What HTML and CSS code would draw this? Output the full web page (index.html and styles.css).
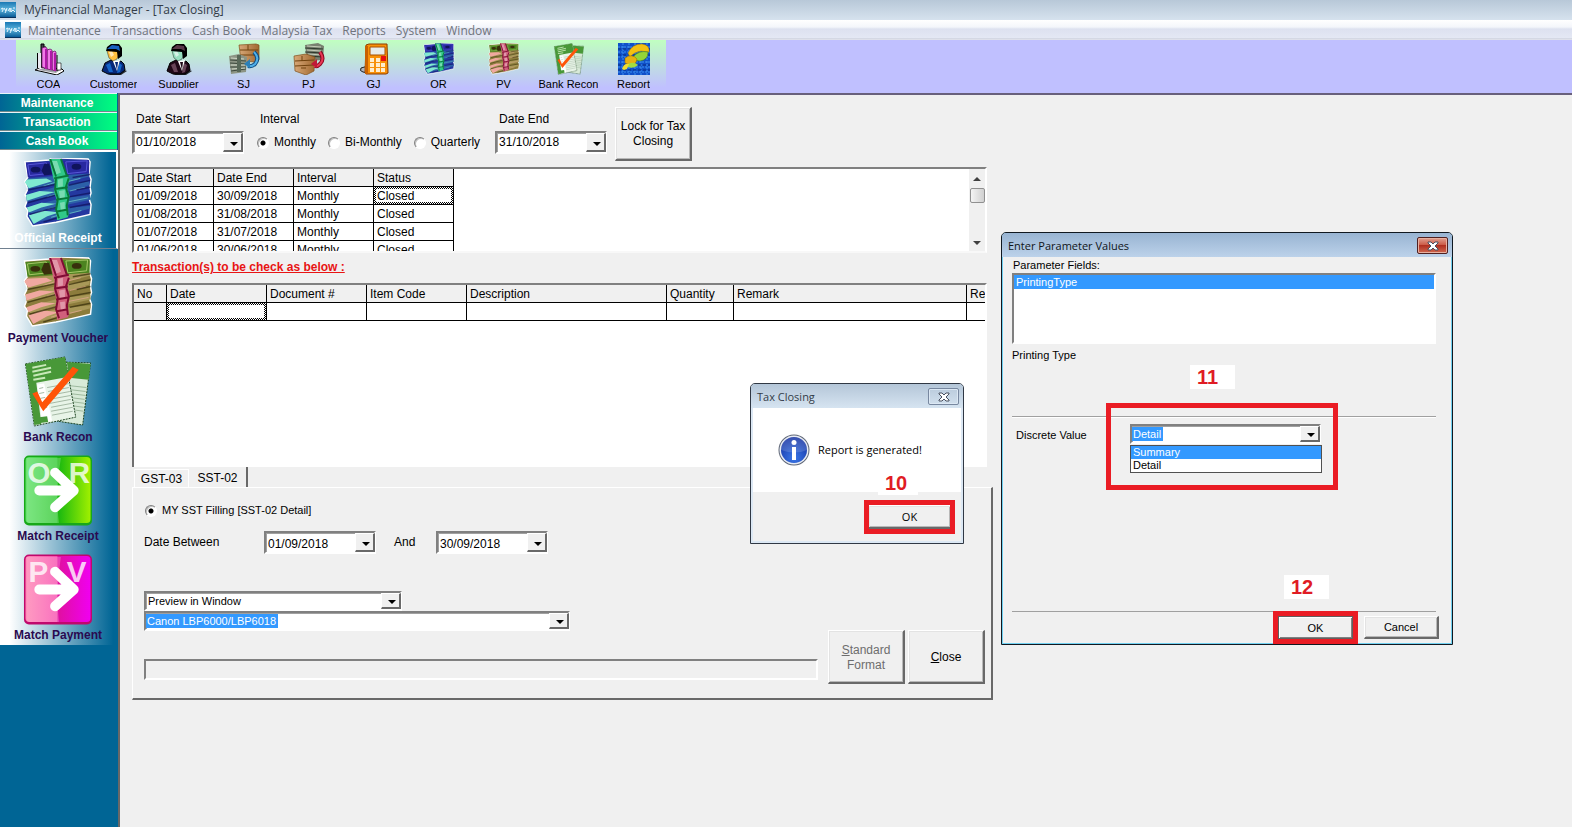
FILE: index.html
```html
<!DOCTYPE html>
<html lang="en">
<head>
<meta charset="utf-8">
<title>MyFinancial Manager - [Tax Closing]</title>
<link rel="stylesheet" href="styles.css">
</head>
<body>
<svg class="defs" aria-hidden="true">
  <defs>
    <linearGradient id="appg" x1="0" y1="0" x2="0" y2="1"><stop offset="0" stop-color="#1a78b4"/><stop offset=".5" stop-color="#5cb4dc"/><stop offset="1" stop-color="#0a5c98"/></linearGradient>
    <linearGradient id="grn"><stop offset="0" stop-color="#58e060"/><stop offset=".48" stop-color="#30c830"/><stop offset=".5" stop-color="#18b810"/><stop offset="1" stop-color="#a0f000"/></linearGradient>
    <linearGradient id="pnk"><stop offset="0" stop-color="#ff80b0"/><stop offset=".48" stop-color="#f84cae"/><stop offset=".5" stop-color="#e010a0"/><stop offset="1" stop-color="#f000f0"/></linearGradient>
    <radialGradient id="inf" cx=".5" cy=".8" r=".8"><stop offset="0" stop-color="#3a78e8"/><stop offset="1" stop-color="#1430a0"/></radialGradient>
    <linearGradient id="wood"><stop offset="0" stop-color="#d8a878"/><stop offset="1" stop-color="#a06830"/></linearGradient>
    <symbol id="app" viewBox="0 0 16 16"><path fill="url(#appg)" d="M0 0h16v15H0z"/><path fill="none" stroke="#e8f6ff" d="M1 7l2-1v2l-1 2M4 6l2 3 1-3M6 9l-1 2M8 9l2-3v4M11 6v4l2-2 2 2M13 6h2"/><path stroke="#08305c" d="M0 15.500h16"/></symbol>
    <symbol id="cash" viewBox="0 0 70 72">
      <path fill="var(--base)" stroke="#fff" stroke-width="1.500" d="M1 4L26 2 28 0 38 0 66 1 68 4 67 16 69 22 68 30 69 36 67 42 69 48 68 58 42 64 33 66 9 70 3 60 4 54 1 50 4 42 1 38 4 32 1 24 4 20z"/>
      <path fill="var(--mid)" d="M4 21l63-6v4L36 27 4 32zM2 38l33-9 32-5v4L40 36 3 45zM3 51l33-9 32-4v5l-32 7-29 7zM5 60l32-8 31-3v3L38 60 9 67z"/>
      <path fill="var(--light)" d="M3 22l20-1 6 3-24 7-4-6zM2 38l14-4 16 1-14 4-15 5zM3 51l15-5 15 1-15 4-13 5zM5 59l14-5 17 2-12 4-14 8z"/>
      <path fill="none" stroke="var(--light)" stroke-opacity=".6" d="M20 29l12-4M24 40l10-3M24 53l10-3M28 61l10-3M46 24l12-3M47 34l16-4M46 45l20-4M47 57l12-3"/>
      <path fill="none" stroke="var(--dark)" stroke-opacity=".75" stroke-width="1.500" d="M4 33l29-6M46 28l22-5M4 46l29-8M46 40l22-4M6 58l29-8M47 51l21-4M20 66l16-5M54 33l14-3M50 20l18-3"/>
      <path fill="var(--top)" d="M2 5l65-3v14L4 20z"/><path fill="none" stroke="var(--line)" d="M4 7l19-2 2 11-19 2zM43 4l22-1-1 11-19 2z"/>
      <ellipse cx="12" cy="12" rx="5" ry="3" fill="var(--dark)"/><ellipse cx="54" cy="9" rx="5" ry="3" fill="var(--dark)"/><path fill="var(--dark)" d="M21 6h5l3 11-8 1-3-5z"/>
      <path fill="var(--strap)" d="M26 1l12 0 5 16 4 5-3 8 3 9-3 8 2 11-1 3-11 3-1-12 1-8-3-9 2-7-3-8z"/>
      <path fill="#fff" fill-opacity=".35" d="M29 3l5 0 4 12-5 2zM35 22l5-1v8l-5 1zM36 34l6-1v8l-5 1zM37 46l5-1v9l-4 1z"/>
      <path fill="none" stroke="var(--edge)" stroke-width="2" d="M27 1l6 18M38 1l6 17M31 21l15-3M32 32l13-2M33 43l12-2M34 55l11-2M33 21l-1 11 3 10-2 11 3 9M46 21l-3 9 3 10-2 9 1 10"/>
    </symbol>
    <symbol id="recon" viewBox="0 0 70 72">
      <path fill="#d8ead8" stroke="#18401c" stroke-dasharray="2 1" d="M34 6l34 1-8 63-26-4z"/><path fill="#489838" d="M44 6l24 2-2 16-20-2z"/>
      <path stroke="#9cb89c" d="M46 30l18 2M46 34l17 2M46 38l17 2M46 42l16 2M46 46l16 2M46 50l15 2M46 54l15 2"/>
      <path fill="#e8f4e8" stroke="#18401c" stroke-dasharray="2 1" d="M2 8L42 1l11 61-42 9z"/>
      <path fill="#489838" d="M2 8L42 1l4 20-33 6 5 42-7 1z"/>
      <path stroke="#c8e8b8" stroke-width="2" d="M9 12l14-3M9 16l19-4M10 20l18-4M10 24l12-2"/>
      <path fill="#fff" d="M14 29l7-1 8 38-10 2z"/><path fill="#489838" d="M16 62l8-1 1 6-8 1z"/>
      <path stroke="#a4b8a4" d="M24 32l22-4M25 36l21-4M26 40l21-4M26 44l22-4M27 48l21-4M28 52l21-4M28 56l22-4M29 60l21-4M16 33l4-1M16 38l5-1M17 43l5-1M18 48l5-1M19 53l5-1"/>
      <path fill="#ff5408" d="M9 38l5-2 5 11L50 11l6 3-36 42z"/>
    </symbol>
    <symbol id="person" viewBox="0 0 32 32">
      <path fill="#000" fill-opacity=".8" d="M24 26l5 2-6 4H10z"/>
      <path fill="var(--suit)" stroke="#000" d="M4 28l3-8 6-3 5 3 5-2 3 3 1 6-5 4-12 0z"/>
      <path fill="var(--suit-hi)" d="M8 22l4-2 3 9-4 0zM21 20l3 2-2 7-3 1z"/>
      <path fill="#fff" d="M14 16l4 2 4-1-3 11z"/><path fill="var(--suit)" d="M17 19h3l-1 8z"/>
      <path fill="var(--skin)" stroke="#000" stroke-width=".4" d="M9 8l4-3 7 1 1 5-2 5-4 2-4-3z"/><path fill="#fff" fill-opacity=".6" d="M11 9l3-1 2 4-3 2z"/>
      <path fill="#000" d="M8 8l1-4 4-3 8 0 3 4 0 8-4 3-1-7z"/><path fill="var(--hair)" d="M9 6l5-4 7 1 1 5-4-2z"/>
    </symbol>
  </defs>
</svg>

<header class="titlebar"><svg class="app-icon"><use href="#app"/></svg><h1 class="title-text">MyFinancial Manager - [Tax Closing]</h1></header>
<nav class="menubar" aria-label="Main menu">
  <svg class="app-icon"><use href="#app"/></svg>
  <button>Maintenance</button><button>Transactions</button><button>Cash Book</button><button>Malaysia Tax</button><button>Reports</button><button>System</button><button>Window</button>
</nav>
<div class="toolbar">
  <div class="tools">
    <button class="tool"><svg viewBox="0 0 32 32"><path fill="#fff" stroke="#000" d="M2 27l6-3 21 2 2 2-7 4z"/><path fill="#a0a0a8" d="M5 27l5-2 17 2-4 3z"/><path fill="#404048" stroke="#000" d="M8 1h3v23H8z"/><path fill="#e8e8f0" d="M5 10h3v15H5z"/><path stroke="#000" d="M4.500 10v15M12 3v23M16 6v20M20 9v18M24 12v16"/><path fill="#f078e8" stroke="#60105c" stroke-width=".7" d="M9 5l3-1 2 1v21l-5-2zM14 7l3-1 2 1v20l-5-1zM19 9l3-1 1 1v19l-4-1z"/><path fill="#b018a8" d="M12 6h2v20h-2zM17 8h2v19h-2zM21 10h2v18h-2z"/><path fill="#fff" stroke="#000" stroke-width=".6" d="M24 20h4v7h-4z"/></svg><span>COA</span></button>
    <button class="tool customer"><svg><use href="#person"/></svg><span>Customer</span></button>
    <button class="tool supplier"><svg><use href="#person"/></svg><span>Supplier</span></button>
    <button class="tool"><svg viewBox="0 0 32 32"><path fill="url(#wood)" stroke="#80501c" stroke-width=".7" d="M11 2l17-1 3 1v15l-3 2-15-1z"/><path stroke="#70420e" fill="none" d="M12 7h18M12 12h18M20 2v5"/><path fill="#8c9484" d="M1 13l10-2 8 3-1 15-15 2z"/><path fill="none" stroke="#3c483c" d="M2 17l16 1M2 20l16 1M2 24l16 0M3 28l15-2"/><path stroke="#d0d8c8" d="M3 15l13 1M3 22l14 0M4 26l13-1"/><path fill="#586858" d="M9 12h4v17H9z"/><path fill="none" stroke="#104c80" stroke-width="4" d="M26 9q6 6 1 12-3 3-7 2"/><path fill="none" stroke="#50b0e8" stroke-width="2" d="M26 9q6 6 1 12-3 3-8 2"/><path fill="#2c80b8" d="M16 21l6-5v9z"/></svg><span>SJ</span></button>
    <button class="tool"><svg viewBox="0 0 32 32"><path fill="#788070" d="M12 2l13-2 6 3-1 14-16 1z"/><path stroke="#2c382c" d="M12 5l18 1M12 9l18 1M13 13l17 1"/><path stroke="#c4ccb8" d="M14 3l14 1M14 7l14 1M15 11l14 1"/><path fill="url(#wood)" stroke="#80501c" stroke-width=".7" d="M1 13l12-2 9 3-1 14-8 4-11-4z"/><path stroke="#70420e" fill="none" d="M2 18l19-1M2 23l19-1M9 13v5M8 25h5"/><path fill="none" stroke="#8c0820" stroke-width="4" d="M27 9q5 7 0 12-3 3-5 2"/><path fill="none" stroke="#e83854" stroke-width="2" d="M27 9q5 7 0 12-3 3-6 2"/><path fill="#c01838" d="M18 21l6-5v9z"/></svg><span>PJ</span></button>
    <button class="tool"><svg viewBox="0 0 32 32"><path fill="#b0b4bc" stroke="#202020" d="M3 25q-2 3 2 4l5 1V23z"/><path fill="#f89008" stroke="#8c3c00" d="M8 2l3-1h18l1 29-2 1H8L7 29z"/><path fill="#c86000" d="M7 3h3v28H7z"/><path fill="#e8ecec" stroke="#a85000" d="M12 4h15v8H12z"/><path fill="#ffeccc" d="M12 15h4v4h-4zM18 15h4v4h-4zM12 20h4v4h-4zM18 20h4v4h-4zM23 20h4v4h-4zM12 25h4v4h-4zM18 25h4v4h-4zM23 25h4v4h-4z"/><path fill="#e81010" d="M23 13h5v5h-5z"/></svg><span>GJ</span></button>
    <button class="tool cash-or"><svg><use href="#cash"/></svg><span>OR</span></button>
    <button class="tool cash-pv"><svg><use href="#cash"/></svg><span>PV</span></button>
    <button class="tool"><svg><use href="#recon"/></svg><span>Bank Recon</span></button>
    <button class="tool"><svg viewBox="0 0 32 32"><path fill="#1050c8" d="M0 0h32v32H0z"/><path stroke="#3c90f0" stroke-dasharray="2 1" d="M0 4h32M0 9h32M0 14h32M0 19h32M0 24h32M0 29h32M5 0v32M11 0v32M17 0v32M23 0v32M29 0v32"/><path stroke="#082c80" stroke-dasharray="3 2" d="M0 6h32M0 12h32M0 22h32M0 27h32"/><path fill="#f4c010" stroke="#a87800" stroke-width=".5" d="M10 10Q14 1 24 1q8 1 7 8l-8-1q-7 1-11 6z"/><path fill="#94d438" stroke="#3c7c10" stroke-width=".5" d="M15 14q6-7 15-5 0 8-8 9l-6-1z"/><path fill="#e8b010" stroke="#906000" stroke-width=".5" d="M7 15q7-5 12 1-1 6-7 6l-5-2z"/><path fill="#a4dc40" d="M10 21q6-3 10 1-4 4-10 2z"/><path fill="#f0dc30" d="M4 26q2-6 7-5l-2 5-3 1z"/></svg><span>Report</span></button>
  </div>
</div>

<div class="shell">
  <aside class="sidebar">
    <button class="group">Maintenance</button>
    <button class="group">Transaction</button>
    <button class="group">Cash Book</button>
    <button class="side-item active cash-or"><svg><use href="#cash"/></svg><span>Official Receipt</span></button>
    <button class="side-item cash-pv"><svg><use href="#cash"/></svg><span>Payment Voucher</span></button>
    <button class="side-item"><svg><use href="#recon"/></svg><span>Bank Recon</span></button>
    <button class="side-item"><svg viewBox="0 0 70 72"><rect x=".5" y=".5" width="69" height="71" rx="5" fill="#18a818"/><rect x="2" y="2" width="66" height="67" rx="4" fill="url(#grn)"/><path fill="#fff" fill-opacity=".22" d="M3 3h35q-6 34-2 66H6q-3 0-3-4z"/><text x="4" y="28" class="glyph">O</text><text x="46" y="28" class="glyph">R</text><path fill="none" stroke="#fff" stroke-width="10" stroke-linecap="round" stroke-linejoin="round" d="M16 36h34M32 18l19 18-19 17"/></svg><span>Match Receipt</span></button>
    <button class="side-item"><svg viewBox="0 0 70 72"><rect x=".5" y=".5" width="69" height="71" rx="5" fill="#c0086c"/><rect x="2" y="2" width="66" height="67" rx="4" fill="url(#pnk)"/><path fill="#fff" fill-opacity=".22" d="M3 3h35q-6 34-2 66H6q-3 0-3-4z"/><text x="5" y="28" class="glyph">P</text><text x="44" y="28" class="glyph">V</text><path fill="none" stroke="#fff" stroke-width="10" stroke-linecap="round" stroke-linejoin="round" d="M16 36h34M32 18l19 18-19 17"/></svg><span>Match Payment</span></button>
  </aside>

  <main class="workspace">
    <form class="filters">
      <div class="field"><label for="ds">Date Start</label><span class="combo date"><select id="ds"><option>01/10/2018</option></select></span></div>
      <fieldset class="field interval"><legend>Interval</legend>
        <div class="radios">
          <label><input type="radio" name="int" checked>Monthly</label>
          <label><input type="radio" name="int">Bi-Monthly</label>
          <label><input type="radio" name="int">Quarterly</label>
        </div>
      </fieldset>
      <div class="field end"><label for="de">Date End</label><span class="combo date"><select id="de"><option>31/10/2018</option></select></span></div>
      <button type="button" class="push big">Lock for Tax<br>Closing</button>
    </form>

    <div class="grid periods">
      <div class="view">
        <table class="t-periods">
          <thead><tr><th>Date Start</th><th>Date End</th><th>Interval</th><th>Status</th></tr></thead>
          <tbody>
            <tr><td>01/09/2018</td><td>30/09/2018</td><td>Monthly</td><td class="focus"><span>Closed</span></td></tr>
            <tr><td>01/08/2018</td><td>31/08/2018</td><td>Monthly</td><td>Closed</td></tr>
            <tr><td>01/07/2018</td><td>31/07/2018</td><td>Monthly</td><td>Closed</td></tr>
            <tr><td>01/06/2018</td><td>30/06/2018</td><td>Monthly</td><td>Closed</td></tr>
          </tbody>
        </table>
      </div>
      <div class="scrollbar"><i class="up"></i><i class="thumb"></i><i class="down"></i></div>
    </div>

    <h2 class="notice">Transaction(s) to be check as below :</h2>

    <div class="grid checks">
      <div class="view">
        <table class="t-checks">
          <colgroup><col class="c-no"><col class="c-m"><col class="c-m"><col class="c-m"><col class="c-desc"><col class="c-qty"><col class="c-rem"><col class="c-m"></colgroup>
          <thead><tr><th>No</th><th>Date</th><th>Document #</th><th>Item Code</th><th>Description</th><th>Quantity</th><th>Remark</th><th>Re</th></tr></thead>
          <tbody><tr><td class="fixed"></td><td class="focus"><span></span></td><td></td><td></td><td></td><td></td><td></td><td></td></tr></tbody>
        </table>
      </div>
    </div>

    <div class="tabs" role="tablist"><button role="tab" aria-selected="false">GST-03</button><button role="tab" aria-selected="true">SST-02</button></div>
    <section class="panel">
      <div class="panel-left">
        <label class="filling"><input type="radio" name="sst" checked>MY SST Filling [SST-02 Detail]</label>
        <div class="between"><label for="d1">Date Between</label><span class="combo date"><select id="d1"><option>01/09/2018</option></select></span><label class="and" for="d2">And</label><span class="combo date"><select id="d2"><option>30/09/2018</option></select></span></div>
        <span class="combo small preview"><select aria-label="Output"><option>Preview in Window</option></select></span>
        <span class="combo small printer"><select class="hit" aria-label="Printer"><option>Canon LBP6000/LBP6018</option></select></span>
        <div class="progress" role="progressbar" aria-label="Progress"></div>
      </div>
      <div class="actions"><button class="push big" disabled><span><u>S</u>tandard<br>Format</span></button><button class="push big"><span><u>C</u>lose</span></button></div>
    </section>
  </main>
</div>

<div class="dialog message" role="dialog" aria-labelledby="m-title">
  <div class="dlg-title"><h2 id="m-title">Tax Closing</h2><button class="close" aria-label="Close"><svg viewBox="0 0 12 10"><path d="M1 1h3l2 2 2-2h3v1L8 5l3 3v1H8L6 7 4 9H1V8l3-3-3-3z"/></svg></button></div>
  <div class="msg-body"><svg class="info" viewBox="0 0 32 32"><circle cx="16" cy="16" r="15.500" fill="#606878"/><circle cx="16" cy="16" r="14.500" fill="#e8ecf4"/><circle cx="16" cy="16" r="13" fill="url(#inf)"/><path fill="#fff" fill-opacity=".15" d="M3 16a13 13 0 0 1 26 0q-12 5-26 0z"/><circle cx="16" cy="8.500" r="2.500" fill="#fff"/><path fill="#fff" d="M14 13h4v13h-4z"/></svg><span>Report is generated!</span></div>
  <div class="msg-foot"><button class="push marked">OK</button></div>
  <b class="step s10">10</b>
</div>

<div class="dialog params" role="dialog" aria-labelledby="p-title">
  <div class="dlg-title"><h2 id="p-title">Enter Parameter Values</h2><button class="close red" aria-label="Close"><svg viewBox="0 0 12 10"><path d="M1 1h3l2 2 2-2h3v1L8 5l3 3v1H8L6 7 4 9H1V8l3-3-3-3z"/></svg></button></div>
  <div class="par-body">
    <p class="par-label" id="pf">Parameter Fields:</p>
    <ul class="listbox" role="listbox" aria-labelledby="pf"><li role="option" aria-selected="true">PrintingType</li></ul>
    <p class="par-name">Printing Type</p>
    <div class="discrete">
      <label for="dv">Discrete Value</label>
      <div class="drop"><span class="combo small"><select class="hit" id="dv"><option>Detail</option></select></span>
        <ul class="dropdown" role="listbox" aria-label="Values"><li role="option" aria-selected="true">Summary</li><li role="option" aria-selected="false">Detail</li></ul>
        <div class="frame"></div></div>
    </div>
    <div class="par-foot"><button class="push marked default">OK</button><button class="push">Cancel</button></div>
  </div>
  <b class="step s11">11</b><b class="step s12">12</b>
</div>
</body>
</html>
```

FILE: styles.css
```css
* { box-sizing: border-box; }
body { margin: 0; min-height: 100vh; display: flex; flex-direction: column; position: relative; background: #f0f0f0; color: #000; font: 12px/15px "Liberation Sans", Arial, sans-serif; overflow-x: hidden; }
button, select, input { font: inherit; color: inherit; margin: 0; }
button { border: 0; padding: 0; background: none; }
h1, h2, p, ul { margin: 0; padding: 0; font-size: inherit; font-weight: normal; list-style: none; }
.defs { position: absolute; width: 0; height: 0; }

.titlebar, .menubar, .dialog { font-family: "Open Sans", "Noto Sans", sans-serif; }
.titlebar { display: flex; align-items: center; height: 20px; gap: 8px; background: linear-gradient(#b8c8d8, #d6e2ee); color: #333c48; }
.titlebar .title-text { line-height: 18px; }
.app-icon { width: 16px; height: 16px; flex: none; }
.menubar { display: flex; align-items: center; height: 20px; padding-left: 5px; background: linear-gradient(#fff 0, #f4f6fb 35%, #dde1f0 45%, #e4e8f4 90%, #c4c8d4 95%, #f8f8ff); color: #70747c; }
.menubar button { margin-left: 10px; white-space: nowrap; }
.menubar .app-icon + button { margin-left: 7px; }

.toolbar { height: 53px; padding-left: 16px; background: #c0c0ff; flex: none; }
.tools { display: flex; width: max-content; height: 100%; background: linear-gradient(#c0ffc0, #c0c0ff 90%); }
.tool { width: 65px; display: flex; flex-direction: column; align-items: center; padding-top: 3px; font-size: 11px; }
.tool svg { width: 32px; height: 32px; }
.tool span { height: 13px; line-height: 18px; overflow: hidden; }
.customer { --suit: #062878; --suit-hi: #1464c8; --skin: #ffc040; --hair: #1860c0; }
.supplier { --suit: #200818; --suit-hi: #684458; --skin: #98e0c0; --hair: #583848; }
.cash-or { --base: #2438a0; --mid: #2c60a8; --light: #80e8d0; --dark: #10145c; --top: #2828a0; --line: #5858d8; --strap: #30c888; --edge: #087838; }
.cash-pv { --base: #8c7c3c; --mid: #a89858; --light: #f0a8a0; --dark: #38300c; --top: #4c8420; --line: #a8c868; --strap: #d0607c; --edge: #800c34; }

.shell { flex: 1; display: grid; grid-template-columns: 118px 1fr; }
.sidebar { background: #006595; display: flex; flex-direction: column; }
.group { height: 19px; border-top: 1px solid #e8f4f8; border-bottom: 1px solid #70888c; margin-right: 1px; background: linear-gradient(90deg, #006595, #00ff80); color: #fff; font-weight: bold; line-height: 17px; padding: 1px 3px 0 0; }
.side-item { height: 99px; display: flex; flex-direction: column; align-items: center; padding: 8px 2px 0 0; background: linear-gradient(90deg, #fff 8%, #006595 96%); color: #2a0a50; font-weight: bold; white-space: nowrap; }
.side-item svg { width: 70px; height: 71px; }
.side-item span { line-height: 20px; }
.side-item.active { color: #fff; padding: 6px 0 0; border: solid #fff; border-width: 2px 2px 1px 0; border-bottom-color: #708090; }
.glyph { font: bold 30px "Liberation Sans", Arial, sans-serif; fill: #fff; fill-opacity: .8; }

.workspace { border-left: 2px solid #686868; border-top: 2px solid #68607c; padding: 12px 12px 20px; }
.workspace > * { max-width: 855px; }
.filters { display: flex; align-items: flex-start; margin-bottom: 6px; }
.field { display: flex; flex-direction: column; }
.field > label, .field legend { height: 24px; line-height: 24px; padding: 0 0 0 4px; }
.interval { display: block; border: 0; padding: 0; margin: 0 15px 0 13px; min-width: 0; }
.interval legend { padding-left: 3px; }
.radios { display: flex; gap: 12px; line-height: 23px; }
.radios label { display: flex; align-items: center; gap: 5px; white-space: nowrap; }
input[type=radio] { appearance: none; width: 12px; height: 12px; border-radius: 50%; border: 1px solid; border-color: #808080 #fff #fff #808080; background: #fff; box-shadow: inset 1px 1px #c0c0c0; }
input[type=radio]:checked { background: radial-gradient(circle, #000 0 2px, #fff 3px); }
.end { margin-right: 8px; }

.combo { position: relative; display: flex; align-items: center; background: #fff; border: 2px solid; border-color: #808080 #fff #fff #808080; box-shadow: inset 1px 1px #a0a0a0; height: 23px; }
.combo.date { width: 112px; }
.combo select { appearance: none; flex: 1; border: 0; border-radius: 0; outline: 0; background: transparent; padding: 0 20px 0 2px; height: 100%; }
.combo::after { content: ""; position: absolute; right: -1px; top: 0; bottom: 0; width: 17px; border: 1px solid; border-width: 1px 2px 2px 1px; border-color: #fff #696969 #696969 #fff; background: #f0f0f0; pointer-events: none; }
.combo::before { content: ""; position: absolute; z-index: 1; right: 4px; top: 50%; margin-top: -1px; border: 4px solid transparent; border-top-color: #000; border-bottom: 0; pointer-events: none; }
.combo.small { height: 20px; font-size: 11px; }
.combo select.hit { flex: none; height: 14px; line-height: 14px; padding: 0 1px; background: #3399ff; color: #fff; }

.push { min-width: 75px; height: 23px; background: #f0f0f0; border: solid; border-width: 1px 2px 2px 1px; border-color: #fff #696969 #696969 #fff; box-shadow: inset 1px 1px #e3e3e3, inset -1px -1px #b8b8b8; }
.push.big { width: 77px; height: 54px; white-space: nowrap; }
.push:disabled { color: #6d6d6d; }

.grid { display: flex; background: #fff; border: 2px solid; border-color: #808080 #fff #f8f8f8 #707070; }
.view { flex: 1; min-width: 0; overflow: hidden; }
.periods { height: 86px; }
.checks { height: 184px; border-bottom: 0; }
table { table-layout: fixed; border-collapse: separate; border-spacing: 0; }
.t-periods { width: 320px; }
.t-checks { width: 933px; }
.c-no { width: 33px; } .c-m { width: 100px; } .c-desc { width: 200px; } .c-qty { width: 67px; } .c-rem { width: 233px; }
th, td { height: 18px; line-height: 16px; padding: 1px 0 0 3px; border: solid #000; border-width: 0 1px 1px 0; text-align: left; font-weight: normal; }
th, td.fixed { background: #f0f0f0; }
td.focus { padding: 0; }
td.focus span { display: block; height: 17px; line-height: 14px; padding-left: 1px; border: 2px solid transparent; background: linear-gradient(#fff, #fff) padding-box, repeating-conic-gradient(#000 0 25%, #fff 0 50%) 0 0 / 2px 2px border-box; }
.scrollbar { width: 16px; display: flex; flex-direction: column; align-items: center; background: #f0f0f0; }
.up, .down { margin: 8px 0 7px; border: 4px solid transparent; border-top: 0; border-bottom-color: #404040; }
.down { margin: auto 0 6px; border-top: 4px solid #404040; border-bottom: 0; }
.thumb { width: 15px; height: 15px; border: 1px solid #909090; border-radius: 2px; background: linear-gradient(90deg, #f4f4f4, #d0d0d0); }
.notice { height: 30px; line-height: 29px; color: #e81414; font-weight: bold; text-decoration: underline; }

.tabs { display: flex; align-items: flex-end; height: 20px; padding-left: 2px; }
.tabs button { width: 55px; height: 18px; border: 1px solid #fff; border-width: 1px 1px 0; padding: 2px 0 0; }
.tabs button[aria-selected=true] { width: 59px; height: 20px; border: solid #696969; border-width: 0 2px 0 0; }
.workspace > .panel { max-width: 861px; display: flex; align-items: flex-end; gap: 10px; border: solid; border-width: 1px 2px 2px 1px; border-color: #fff #696969 #696969 #fff; padding: 15px 6px 14px 11px; }
.panel-left { flex: 1; min-width: 0; padding-bottom: 4px; display: flex; flex-direction: column; }
.filling { display: flex; align-items: center; gap: 5px; font-size: 11px; margin-bottom: 13px; height: 15px; padding-left: 1px; }
.between { display: flex; margin-bottom: 37px; line-height: 22px; }
.between > label { width: 120px; }
.between > .and { width: 60px; padding-left: 18px; }
.preview { width: 258px; }
.printer { width: 426px; }
.progress { height: 21px; margin-top: 28px; border: 2px solid; border-color: #808080 #fff #fff #808080; }
.actions { display: flex; gap: 3px; }
.actions .push { padding-top: 2px; }

.dialog { position: absolute; border: 1px solid #303844; border-radius: 5px 5px 0 0; background: #f0f0f0; font-size: 12px; line-height: 15px; }
.dlg-title { height: 24px; display: flex; justify-content: space-between; padding: 4px 4px 0 6px; border-radius: 4px 4px 0 0; background: linear-gradient(#b4c6d8, #d6e4f1); }
.dlg-title h2 { line-height: 18px; color: #333c48; font-size: 11px; }
.close { width: 31px; height: 17px; border: 1px solid #7888a0; border-radius: 2px; box-shadow: inset 0 0 0 1px #dce8f4; display: flex; align-items: center; justify-content: center; }
.close svg { width: 12px; height: 10px; fill: #fff; stroke: #485060; }
.close.red { background: linear-gradient(#e0a090, #cc5c48 45%, #b03020 50%, #d06850); border-color: #502020; box-shadow: inset 0 0 0 1px #e8b0a0; }
.dialog .push, .params .discrete, .params .listbox { font-size: 11px; }

.message { left: 750px; top: 383px; width: 214px; box-shadow: inset 0 0 0 2px #dce8f4; }
.msg-body { display: flex; align-items: center; gap: 8px; height: 84px; margin: 0 2px; padding: 0 0 1px 25px; background: #fff; white-space: nowrap; font-size: 11px; }
.info { width: 32px; height: 32px; }
.msg-foot { display: flex; justify-content: flex-end; padding: 13px 13px 14px; }
.marked { outline: 5px solid #ea1c24; }
.message .push { width: 81px; height: 24px; border-width: 1px 0 2px; }
.step { position: absolute; background: #fff; color: #e01c24; font: bold 20px/24px "Liberation Sans", Arial, sans-serif; padding: 0 7px; height: 24px; width: 45px; }
.step.s10 { left: 127px; top: 87px; width: 40px; }
.s11 { left: 188px; top: 132px; }
.s12 { left: 282px; top: 342px; }

.params { left: 1001px; top: 232px; width: 452px; border-color: #101820; box-shadow: inset 0 0 0 1px #70d0f0; }
.params .dlg-title { background: linear-gradient(#98b4d2, #bcd2ea); }
.params h2 { color: #101418; }
.par-body { padding: 1px 13px 5px 10px; font: 11px/14px "Liberation Sans", Arial, sans-serif; }
.par-label { line-height: 15px; padding-left: 1px; }
.listbox, .par-name, .discrete { margin-right: 3px; }
.listbox { height: 71px; background: #fff; border: 2px solid; border-color: #808080 #fff #fff #808080; }
.listbox li { padding-left: 2px; line-height: 14px; }
[role=option][aria-selected=true] { background: #3399ff; color: #fff; }
.par-name { height: 73px; line-height: 22px; border-bottom: 1px solid #a0a0a0; box-shadow: 0 1px #fff; }
.discrete { display: flex; height: 195px; padding: 7px 0 0 4px; border-bottom: 1px solid #a0a0a0; line-height: 22px; }
.discrete label { width: 114px; }
.drop { position: relative; width: 191px; line-height: 13px; }
.dropdown { position: absolute; left: 0; top: 21px; width: 192px; border: 1px solid #505050; background: #fff; }
.dropdown li { padding-left: 2px; }
.frame { position: absolute; left: -24px; top: -21px; width: 232px; height: 87px; border: 5px solid #ea1c24; }
.par-foot { display: flex; justify-content: flex-end; gap: 11px; padding-top: 4px; }
.par-foot .default { border: 1px solid #606060; box-shadow: inset 1px 1px #fff, inset -1px -1px #808080; }
```
